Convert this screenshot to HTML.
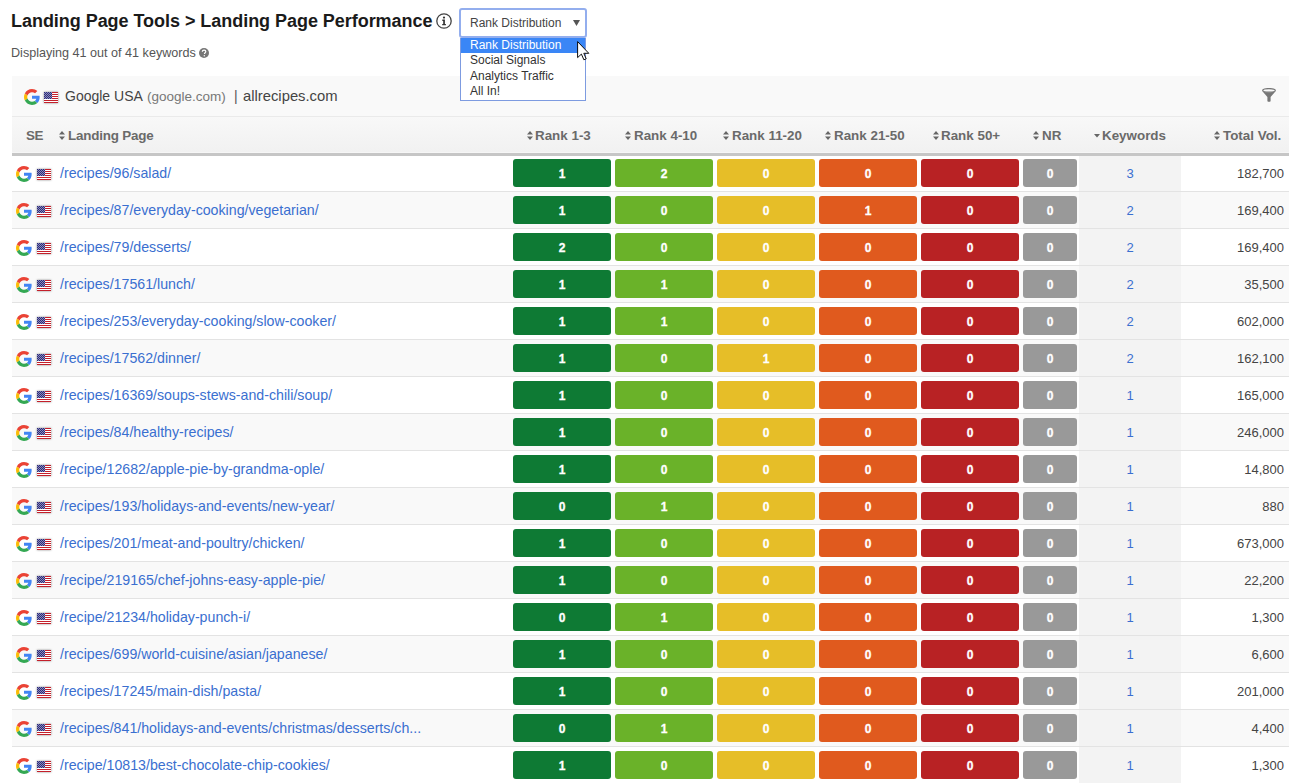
<!DOCTYPE html>
<html><head><meta charset="utf-8">
<style>
*{box-sizing:border-box;margin:0;padding:0}
html,body{width:1303px;height:783px;overflow:hidden;background:#fff;font-family:"Liberation Sans",sans-serif;color:#333}
.abs{position:absolute}
.title{position:absolute;left:11px;top:9px;font-size:18px;letter-spacing:-0.04px;line-height:24px;font-weight:bold;color:#1a1a1a;white-space:nowrap}
.info{position:absolute;left:436px;top:13px}
.sel{position:absolute;left:459px;top:8px;width:128px;height:30px;border:2px solid #93aeee;border-radius:3px;background:#fff;font-size:12px;line-height:14px;color:#444;z-index:5}
.sel .t{position:absolute;left:9px;top:6px}
.sel svg{position:absolute;left:112px;top:10px}
.dd{position:absolute;left:460px;top:38px;width:126px;height:63px;border:1px solid #7d9be0;border-top:0;background:#fff;font-size:12px;color:#333;z-index:5}
.dd .it{position:absolute;left:0;width:124px;height:15px;padding-left:9px;line-height:15px}
.dd .hl{background:#3a86f6;color:#fff}
.cursor{position:absolute;left:577px;top:41px;z-index:6}
.disp{position:absolute;left:11px;top:46px;font-size:12.6px;line-height:15px;color:#555;white-space:nowrap}
.qm{position:absolute;left:199px;top:48px}
.panel{position:absolute;left:12px;top:76px;width:1277px}
.bar{height:41px;background:#f9f9f9;border-bottom:1px solid #eaeaea;position:relative}
.bar svg{position:absolute}
.bar span{position:absolute;white-space:nowrap;line-height:20px;color:#444}
.hdr{height:39px;background:linear-gradient(#f8f8f8,#f1f1f1);border-bottom:3px solid #c6c6c6;position:relative;z-index:2;font-size:13.4px;font-weight:bold;color:#6a6a6a;box-shadow:inset 0 -1px 0 #f6f6f6}
.hdr div{position:absolute;top:10.5px;white-space:nowrap;line-height:16px}
.hdr svg{position:absolute;top:14px}
.rows{margin-top:-1px}
.row{height:37px;border-bottom:1px solid #e3e3e3;position:relative;background:#fff}
.row.odd{background:#f9f9f9}
.row>*{position:absolute}
.lp{left:48px;top:0;font-size:14.2px;color:#3a6fd0;line-height:36px;white-space:nowrap}
.c{top:4px;width:98px;height:28px;border-radius:3px;color:#fff;font-weight:bold;font-size:12px;-webkit-text-stroke:0.3px #fff;text-align:center;line-height:30px}
.r1{left:501px;background:#0e7a34}
.r2{left:603px;background:#6ab229}
.r3{left:705px;background:#e6be28}
.r4{left:807px;background:#e05a1e}
.r5{left:909px;background:#b82224}
.nr{left:1011px;width:54px;background:#999}
.kw{left:1067px;top:0;padding-top:1px;width:102px;height:36px;background:#f3f3f3;text-align:center;line-height:36px;font-size:13px;color:#3a6fd0}

.tv{left:1169px;top:1px;width:108px;text-align:right;padding-right:5px;line-height:36px;font-size:13px;color:#444}
.fl,.bfl{filter:drop-shadow(0 0.5px 1px rgba(0,0,0,.45))}
</style></head><body>
<div class="title">Landing Page Tools &gt; Landing Page Performance</div>
<svg class="info" width="16" height="16" viewBox="0 0 16 16"><circle cx="8" cy="8" r="7.2" fill="none" stroke="#444" stroke-width="1.3"/><circle cx="8" cy="4.6" r="1.1" fill="#333"/><path d="M6.3 6.6h2.6v4.4h1v1.3H6.2v-1.3h1v-3.1h-.9z" fill="#333"/></svg>
<div class="sel"><span class="t">Rank Distribution</span><svg width="7" height="6" viewBox="0 0 7 6"><path d="M0 0h7L3.5 6z" fill="#555"/></svg></div>
<div class="dd">
<div class="it hl" style="top:0">Rank Distribution</div>
<div class="it" style="top:15px">Social Signals</div>
<div class="it" style="top:30.5px">Analytics Traffic</div>
<div class="it" style="top:46px">All In!</div>
</div>
<svg class="cursor" width="13" height="20" viewBox="0 0 13 20"><path d="M0.6 0.6V16.6L4.4 13.1L6.9 18.8L9.2 17.8L6.8 12.3H11.8Z" fill="#fff" stroke="#000" stroke-width="0.95" stroke-linejoin="round"/></svg>
<div class="disp">Displaying 41 out of 41 keywords</div>
<svg class="qm" width="10" height="10" viewBox="0 0 10 10"><circle cx="5" cy="5" r="5" fill="#777"/><path d="M3.3 3.8c0-1 .8-1.7 1.8-1.7s1.7.7 1.7 1.5c0 1.2-1.3 1.2-1.3 2.3" fill="none" stroke="#fff" stroke-width="1.2"/><circle cx="5.3" cy="7.7" r=".7" fill="#fff"/></svg>
<div class="panel">
<div class="bar"><svg class="bg" style="left:12px;top:13px" width="16" height="16" viewBox="0 0 48 48"><path fill="#EA4335" d="M24 9.5c3.54 0 6.71 1.22 9.21 3.6l6.85-6.85C35.9 2.38 30.47 0 24 0 14.62 0 6.51 5.38 2.56 13.22l7.98 6.19C12.43 13.72 17.74 9.5 24 9.5z"/><path fill="#4285F4" d="M46.98 24.55c0-1.57-.15-3.09-.38-4.55H24v9.02h12.94c-.58 2.96-2.26 5.480-4.780 7.180l7.730 6c4.510-4.180 7.090-10.360 7.090-17.650z"/><path fill="#FBBC05" d="M10.53 28.59c-.48-1.45-.76-2.99-.76-4.59s.27-3.14.76-4.59l-7.98-6.19C.92 16.46 0 20.12 0 24c0 3.88.92 7.54 2.56 10.78l7.97-6.19z"/><path fill="#34A853" d="M24 48c6.48 0 11.93-2.13 15.89-5.81l-7.73-6c-2.15 1.45-4.92 2.3-8.16 2.3-6.26 0-11.57-4.22-13.47-9.91l-7.98 6.19C6.51 42.62 14.62 48 24 48z"/></svg><svg class="bfl" style="left:32px;top:16px" width="14" height="11" viewBox="0 0 14 11"><rect x="0" y="0" width="14" height="1" fill="#c4202b"/><rect x="0" y="1" width="14" height="1" fill="#fff"/><rect x="0" y="2" width="14" height="1" fill="#c4202b"/><rect x="0" y="3" width="14" height="1" fill="#fff"/><rect x="0" y="4" width="14" height="1" fill="#c4202b"/><rect x="0" y="5" width="14" height="1" fill="#fff"/><rect x="0" y="6" width="14" height="1" fill="#c4202b"/><rect x="0" y="7" width="14" height="1" fill="#fff"/><rect x="0" y="8" width="14" height="1" fill="#c4202b"/><rect x="0" y="9" width="14" height="1" fill="#fff"/><rect x="0" y="10" width="14" height="1" fill="#c4202b"/><rect x="0" y="0" width="8" height="7" fill="#2b2b7a"/><rect x="1" y="0" width="1" height="1" fill="#8a8ab8"/><rect x="3" y="0" width="1" height="1" fill="#8a8ab8"/><rect x="5" y="0" width="1" height="1" fill="#8a8ab8"/><rect x="7" y="0" width="1" height="1" fill="#8a8ab8"/><rect x="0" y="1" width="1" height="1" fill="#8a8ab8"/><rect x="2" y="1" width="1" height="1" fill="#8a8ab8"/><rect x="4" y="1" width="1" height="1" fill="#8a8ab8"/><rect x="6" y="1" width="1" height="1" fill="#8a8ab8"/><rect x="1" y="2" width="1" height="1" fill="#8a8ab8"/><rect x="3" y="2" width="1" height="1" fill="#8a8ab8"/><rect x="5" y="2" width="1" height="1" fill="#8a8ab8"/><rect x="7" y="2" width="1" height="1" fill="#8a8ab8"/><rect x="0" y="3" width="1" height="1" fill="#8a8ab8"/><rect x="2" y="3" width="1" height="1" fill="#8a8ab8"/><rect x="4" y="3" width="1" height="1" fill="#8a8ab8"/><rect x="6" y="3" width="1" height="1" fill="#8a8ab8"/><rect x="1" y="4" width="1" height="1" fill="#8a8ab8"/><rect x="3" y="4" width="1" height="1" fill="#8a8ab8"/><rect x="5" y="4" width="1" height="1" fill="#8a8ab8"/><rect x="7" y="4" width="1" height="1" fill="#8a8ab8"/><rect x="0" y="5" width="1" height="1" fill="#8a8ab8"/><rect x="2" y="5" width="1" height="1" fill="#8a8ab8"/><rect x="4" y="5" width="1" height="1" fill="#8a8ab8"/><rect x="6" y="5" width="1" height="1" fill="#8a8ab8"/><rect x="1" y="6" width="1" height="1" fill="#8a8ab8"/><rect x="3" y="6" width="1" height="1" fill="#8a8ab8"/><rect x="5" y="6" width="1" height="1" fill="#8a8ab8"/><rect x="7" y="6" width="1" height="1" fill="#8a8ab8"/></svg>
<span style="left:53px;top:10px;font-size:14px">Google USA</span>
<span style="left:135px;top:11px;font-size:13.5px;color:#777">(google.com)</span>
<span style="left:222px;top:10px;font-size:14px;color:#555">|</span>
<span style="left:231px;top:10px;font-size:14.8px">allrecipes.com</span>
<svg style="left:1250px;top:12px" width="14" height="14" viewBox="0 0 14 14"><ellipse cx="7" cy="2.4" rx="6.3" ry="1.8" fill="none" stroke="#777" stroke-width="1.3"/><path d="M0.4 3.2Q7 5.6 13.6 3.2L8.6 9V13.2Q7 14.2 5.4 13.2V9Z" fill="#777"/></svg>
</div>
<div class="hdr">
<div style="left:14px;letter-spacing:-0.5px">SE</div>
<svg style="left:47px" width="6" height="9" viewBox="0 0 6 9"><path d="M0 3.6L3 0L6 3.6ZM0 5.4L3 9L6 5.4Z" fill="#666"/></svg><svg style="left:515px" width="6" height="9" viewBox="0 0 6 9"><path d="M0 3.6L3 0L6 3.6ZM0 5.4L3 9L6 5.4Z" fill="#666"/></svg><svg style="left:613px" width="6" height="9" viewBox="0 0 6 9"><path d="M0 3.6L3 0L6 3.6ZM0 5.4L3 9L6 5.4Z" fill="#666"/></svg><svg style="left:711px" width="6" height="9" viewBox="0 0 6 9"><path d="M0 3.6L3 0L6 3.6ZM0 5.4L3 9L6 5.4Z" fill="#666"/></svg><svg style="left:813px" width="6" height="9" viewBox="0 0 6 9"><path d="M0 3.6L3 0L6 3.6ZM0 5.4L3 9L6 5.4Z" fill="#666"/></svg><svg style="left:921px" width="6" height="9" viewBox="0 0 6 9"><path d="M0 3.6L3 0L6 3.6ZM0 5.4L3 9L6 5.4Z" fill="#666"/></svg><svg style="left:1021px" width="6" height="9" viewBox="0 0 6 9"><path d="M0 3.6L3 0L6 3.6ZM0 5.4L3 9L6 5.4Z" fill="#666"/></svg><svg style="left:1202px" width="6" height="9" viewBox="0 0 6 9"><path d="M0 3.6L3 0L6 3.6ZM0 5.4L3 9L6 5.4Z" fill="#666"/></svg><svg style="left:1082px;top:17px" width="6" height="4" viewBox="0 0 6 4"><path d="M0 0L3 3.6L6 0Z" fill="#666"/></svg>
<div style="left:56px;letter-spacing:-0.2px">Landing Page</div>
<div style="left:523px">Rank 1-3</div>
<div style="left:622px">Rank 4-10</div>
<div style="left:720px">Rank 11-20</div>
<div style="left:822px">Rank 21-50</div>
<div style="left:929px">Rank 50+</div>
<div style="left:1030px">NR</div>
<div style="left:1090px">Keywords</div>
<div style="left:1211px">Total Vol.</div>
</div>
<div class="rows">
<div class="row"><svg class="g" style="left:4px;top:11px" width="16" height="16" viewBox="0 0 48 48"><path fill="#EA4335" d="M24 9.5c3.54 0 6.71 1.22 9.21 3.6l6.85-6.85C35.9 2.38 30.47 0 24 0 14.62 0 6.51 5.38 2.56 13.22l7.98 6.19C12.43 13.72 17.74 9.5 24 9.5z"/><path fill="#4285F4" d="M46.98 24.55c0-1.57-.15-3.09-.38-4.55H24v9.02h12.94c-.58 2.96-2.26 5.480-4.780 7.180l7.730 6c4.510-4.180 7.090-10.360 7.090-17.650z"/><path fill="#FBBC05" d="M10.53 28.59c-.48-1.45-.76-2.99-.76-4.59s.27-3.14.76-4.59l-7.98-6.19C.92 16.46 0 20.12 0 24c0 3.88.92 7.54 2.56 10.78l7.97-6.19z"/><path fill="#34A853" d="M24 48c6.48 0 11.93-2.13 15.89-5.81l-7.73-6c-2.15 1.45-4.92 2.3-8.16 2.3-6.26 0-11.57-4.22-13.47-9.91l-7.98 6.19C6.51 42.62 14.62 48 24 48z"/></svg><svg class="fl" style="left:25px;top:14px" width="14" height="11" viewBox="0 0 14 11"><rect x="0" y="0" width="14" height="1" fill="#c4202b"/><rect x="0" y="1" width="14" height="1" fill="#fff"/><rect x="0" y="2" width="14" height="1" fill="#c4202b"/><rect x="0" y="3" width="14" height="1" fill="#fff"/><rect x="0" y="4" width="14" height="1" fill="#c4202b"/><rect x="0" y="5" width="14" height="1" fill="#fff"/><rect x="0" y="6" width="14" height="1" fill="#c4202b"/><rect x="0" y="7" width="14" height="1" fill="#fff"/><rect x="0" y="8" width="14" height="1" fill="#c4202b"/><rect x="0" y="9" width="14" height="1" fill="#fff"/><rect x="0" y="10" width="14" height="1" fill="#c4202b"/><rect x="0" y="0" width="8" height="7" fill="#2b2b7a"/><rect x="1" y="0" width="1" height="1" fill="#8a8ab8"/><rect x="3" y="0" width="1" height="1" fill="#8a8ab8"/><rect x="5" y="0" width="1" height="1" fill="#8a8ab8"/><rect x="7" y="0" width="1" height="1" fill="#8a8ab8"/><rect x="0" y="1" width="1" height="1" fill="#8a8ab8"/><rect x="2" y="1" width="1" height="1" fill="#8a8ab8"/><rect x="4" y="1" width="1" height="1" fill="#8a8ab8"/><rect x="6" y="1" width="1" height="1" fill="#8a8ab8"/><rect x="1" y="2" width="1" height="1" fill="#8a8ab8"/><rect x="3" y="2" width="1" height="1" fill="#8a8ab8"/><rect x="5" y="2" width="1" height="1" fill="#8a8ab8"/><rect x="7" y="2" width="1" height="1" fill="#8a8ab8"/><rect x="0" y="3" width="1" height="1" fill="#8a8ab8"/><rect x="2" y="3" width="1" height="1" fill="#8a8ab8"/><rect x="4" y="3" width="1" height="1" fill="#8a8ab8"/><rect x="6" y="3" width="1" height="1" fill="#8a8ab8"/><rect x="1" y="4" width="1" height="1" fill="#8a8ab8"/><rect x="3" y="4" width="1" height="1" fill="#8a8ab8"/><rect x="5" y="4" width="1" height="1" fill="#8a8ab8"/><rect x="7" y="4" width="1" height="1" fill="#8a8ab8"/><rect x="0" y="5" width="1" height="1" fill="#8a8ab8"/><rect x="2" y="5" width="1" height="1" fill="#8a8ab8"/><rect x="4" y="5" width="1" height="1" fill="#8a8ab8"/><rect x="6" y="5" width="1" height="1" fill="#8a8ab8"/><rect x="1" y="6" width="1" height="1" fill="#8a8ab8"/><rect x="3" y="6" width="1" height="1" fill="#8a8ab8"/><rect x="5" y="6" width="1" height="1" fill="#8a8ab8"/><rect x="7" y="6" width="1" height="1" fill="#8a8ab8"/></svg><div class="lp">/recipes/96/salad/</div><div class="c r1">1</div><div class="c r2">2</div><div class="c r3">0</div><div class="c r4">0</div><div class="c r5">0</div><div class="c nr">0</div><div class="kw">3</div><div class="tv">182,700</div></div>
<div class="row odd"><svg class="g" style="left:4px;top:11px" width="16" height="16" viewBox="0 0 48 48"><path fill="#EA4335" d="M24 9.5c3.54 0 6.71 1.22 9.21 3.6l6.85-6.85C35.9 2.38 30.47 0 24 0 14.62 0 6.51 5.38 2.56 13.22l7.98 6.19C12.43 13.72 17.74 9.5 24 9.5z"/><path fill="#4285F4" d="M46.98 24.55c0-1.57-.15-3.09-.38-4.55H24v9.02h12.94c-.58 2.96-2.26 5.480-4.780 7.180l7.730 6c4.510-4.180 7.090-10.360 7.090-17.650z"/><path fill="#FBBC05" d="M10.53 28.59c-.48-1.45-.76-2.99-.76-4.59s.27-3.14.76-4.59l-7.98-6.19C.92 16.46 0 20.12 0 24c0 3.88.92 7.54 2.56 10.78l7.97-6.19z"/><path fill="#34A853" d="M24 48c6.48 0 11.93-2.13 15.89-5.81l-7.73-6c-2.15 1.45-4.92 2.3-8.16 2.3-6.26 0-11.57-4.22-13.47-9.91l-7.98 6.19C6.51 42.62 14.62 48 24 48z"/></svg><svg class="fl" style="left:25px;top:14px" width="14" height="11" viewBox="0 0 14 11"><rect x="0" y="0" width="14" height="1" fill="#c4202b"/><rect x="0" y="1" width="14" height="1" fill="#fff"/><rect x="0" y="2" width="14" height="1" fill="#c4202b"/><rect x="0" y="3" width="14" height="1" fill="#fff"/><rect x="0" y="4" width="14" height="1" fill="#c4202b"/><rect x="0" y="5" width="14" height="1" fill="#fff"/><rect x="0" y="6" width="14" height="1" fill="#c4202b"/><rect x="0" y="7" width="14" height="1" fill="#fff"/><rect x="0" y="8" width="14" height="1" fill="#c4202b"/><rect x="0" y="9" width="14" height="1" fill="#fff"/><rect x="0" y="10" width="14" height="1" fill="#c4202b"/><rect x="0" y="0" width="8" height="7" fill="#2b2b7a"/><rect x="1" y="0" width="1" height="1" fill="#8a8ab8"/><rect x="3" y="0" width="1" height="1" fill="#8a8ab8"/><rect x="5" y="0" width="1" height="1" fill="#8a8ab8"/><rect x="7" y="0" width="1" height="1" fill="#8a8ab8"/><rect x="0" y="1" width="1" height="1" fill="#8a8ab8"/><rect x="2" y="1" width="1" height="1" fill="#8a8ab8"/><rect x="4" y="1" width="1" height="1" fill="#8a8ab8"/><rect x="6" y="1" width="1" height="1" fill="#8a8ab8"/><rect x="1" y="2" width="1" height="1" fill="#8a8ab8"/><rect x="3" y="2" width="1" height="1" fill="#8a8ab8"/><rect x="5" y="2" width="1" height="1" fill="#8a8ab8"/><rect x="7" y="2" width="1" height="1" fill="#8a8ab8"/><rect x="0" y="3" width="1" height="1" fill="#8a8ab8"/><rect x="2" y="3" width="1" height="1" fill="#8a8ab8"/><rect x="4" y="3" width="1" height="1" fill="#8a8ab8"/><rect x="6" y="3" width="1" height="1" fill="#8a8ab8"/><rect x="1" y="4" width="1" height="1" fill="#8a8ab8"/><rect x="3" y="4" width="1" height="1" fill="#8a8ab8"/><rect x="5" y="4" width="1" height="1" fill="#8a8ab8"/><rect x="7" y="4" width="1" height="1" fill="#8a8ab8"/><rect x="0" y="5" width="1" height="1" fill="#8a8ab8"/><rect x="2" y="5" width="1" height="1" fill="#8a8ab8"/><rect x="4" y="5" width="1" height="1" fill="#8a8ab8"/><rect x="6" y="5" width="1" height="1" fill="#8a8ab8"/><rect x="1" y="6" width="1" height="1" fill="#8a8ab8"/><rect x="3" y="6" width="1" height="1" fill="#8a8ab8"/><rect x="5" y="6" width="1" height="1" fill="#8a8ab8"/><rect x="7" y="6" width="1" height="1" fill="#8a8ab8"/></svg><div class="lp">/recipes/87/everyday-cooking/vegetarian/</div><div class="c r1">1</div><div class="c r2">0</div><div class="c r3">0</div><div class="c r4">1</div><div class="c r5">0</div><div class="c nr">0</div><div class="kw">2</div><div class="tv">169,400</div></div>
<div class="row"><svg class="g" style="left:4px;top:11px" width="16" height="16" viewBox="0 0 48 48"><path fill="#EA4335" d="M24 9.5c3.54 0 6.71 1.22 9.21 3.6l6.85-6.85C35.9 2.38 30.47 0 24 0 14.62 0 6.51 5.38 2.56 13.22l7.98 6.19C12.43 13.72 17.74 9.5 24 9.5z"/><path fill="#4285F4" d="M46.98 24.55c0-1.57-.15-3.09-.38-4.55H24v9.02h12.94c-.58 2.96-2.26 5.480-4.780 7.180l7.730 6c4.510-4.180 7.090-10.360 7.090-17.650z"/><path fill="#FBBC05" d="M10.53 28.59c-.48-1.45-.76-2.99-.76-4.59s.27-3.14.76-4.59l-7.98-6.19C.92 16.46 0 20.12 0 24c0 3.88.92 7.54 2.56 10.78l7.97-6.19z"/><path fill="#34A853" d="M24 48c6.48 0 11.93-2.13 15.89-5.81l-7.73-6c-2.15 1.45-4.92 2.3-8.16 2.3-6.26 0-11.57-4.22-13.47-9.91l-7.98 6.19C6.51 42.62 14.62 48 24 48z"/></svg><svg class="fl" style="left:25px;top:14px" width="14" height="11" viewBox="0 0 14 11"><rect x="0" y="0" width="14" height="1" fill="#c4202b"/><rect x="0" y="1" width="14" height="1" fill="#fff"/><rect x="0" y="2" width="14" height="1" fill="#c4202b"/><rect x="0" y="3" width="14" height="1" fill="#fff"/><rect x="0" y="4" width="14" height="1" fill="#c4202b"/><rect x="0" y="5" width="14" height="1" fill="#fff"/><rect x="0" y="6" width="14" height="1" fill="#c4202b"/><rect x="0" y="7" width="14" height="1" fill="#fff"/><rect x="0" y="8" width="14" height="1" fill="#c4202b"/><rect x="0" y="9" width="14" height="1" fill="#fff"/><rect x="0" y="10" width="14" height="1" fill="#c4202b"/><rect x="0" y="0" width="8" height="7" fill="#2b2b7a"/><rect x="1" y="0" width="1" height="1" fill="#8a8ab8"/><rect x="3" y="0" width="1" height="1" fill="#8a8ab8"/><rect x="5" y="0" width="1" height="1" fill="#8a8ab8"/><rect x="7" y="0" width="1" height="1" fill="#8a8ab8"/><rect x="0" y="1" width="1" height="1" fill="#8a8ab8"/><rect x="2" y="1" width="1" height="1" fill="#8a8ab8"/><rect x="4" y="1" width="1" height="1" fill="#8a8ab8"/><rect x="6" y="1" width="1" height="1" fill="#8a8ab8"/><rect x="1" y="2" width="1" height="1" fill="#8a8ab8"/><rect x="3" y="2" width="1" height="1" fill="#8a8ab8"/><rect x="5" y="2" width="1" height="1" fill="#8a8ab8"/><rect x="7" y="2" width="1" height="1" fill="#8a8ab8"/><rect x="0" y="3" width="1" height="1" fill="#8a8ab8"/><rect x="2" y="3" width="1" height="1" fill="#8a8ab8"/><rect x="4" y="3" width="1" height="1" fill="#8a8ab8"/><rect x="6" y="3" width="1" height="1" fill="#8a8ab8"/><rect x="1" y="4" width="1" height="1" fill="#8a8ab8"/><rect x="3" y="4" width="1" height="1" fill="#8a8ab8"/><rect x="5" y="4" width="1" height="1" fill="#8a8ab8"/><rect x="7" y="4" width="1" height="1" fill="#8a8ab8"/><rect x="0" y="5" width="1" height="1" fill="#8a8ab8"/><rect x="2" y="5" width="1" height="1" fill="#8a8ab8"/><rect x="4" y="5" width="1" height="1" fill="#8a8ab8"/><rect x="6" y="5" width="1" height="1" fill="#8a8ab8"/><rect x="1" y="6" width="1" height="1" fill="#8a8ab8"/><rect x="3" y="6" width="1" height="1" fill="#8a8ab8"/><rect x="5" y="6" width="1" height="1" fill="#8a8ab8"/><rect x="7" y="6" width="1" height="1" fill="#8a8ab8"/></svg><div class="lp">/recipes/79/desserts/</div><div class="c r1">2</div><div class="c r2">0</div><div class="c r3">0</div><div class="c r4">0</div><div class="c r5">0</div><div class="c nr">0</div><div class="kw">2</div><div class="tv">169,400</div></div>
<div class="row odd"><svg class="g" style="left:4px;top:11px" width="16" height="16" viewBox="0 0 48 48"><path fill="#EA4335" d="M24 9.5c3.54 0 6.71 1.22 9.21 3.6l6.85-6.85C35.9 2.38 30.47 0 24 0 14.62 0 6.51 5.38 2.56 13.22l7.98 6.19C12.43 13.72 17.74 9.5 24 9.5z"/><path fill="#4285F4" d="M46.98 24.55c0-1.57-.15-3.09-.38-4.55H24v9.02h12.94c-.58 2.96-2.26 5.480-4.780 7.180l7.730 6c4.510-4.180 7.090-10.360 7.090-17.650z"/><path fill="#FBBC05" d="M10.53 28.59c-.48-1.45-.76-2.99-.76-4.59s.27-3.14.76-4.59l-7.98-6.19C.92 16.46 0 20.12 0 24c0 3.88.92 7.54 2.56 10.78l7.97-6.19z"/><path fill="#34A853" d="M24 48c6.48 0 11.93-2.13 15.89-5.81l-7.73-6c-2.15 1.45-4.92 2.3-8.16 2.3-6.26 0-11.57-4.22-13.47-9.91l-7.98 6.19C6.51 42.62 14.62 48 24 48z"/></svg><svg class="fl" style="left:25px;top:14px" width="14" height="11" viewBox="0 0 14 11"><rect x="0" y="0" width="14" height="1" fill="#c4202b"/><rect x="0" y="1" width="14" height="1" fill="#fff"/><rect x="0" y="2" width="14" height="1" fill="#c4202b"/><rect x="0" y="3" width="14" height="1" fill="#fff"/><rect x="0" y="4" width="14" height="1" fill="#c4202b"/><rect x="0" y="5" width="14" height="1" fill="#fff"/><rect x="0" y="6" width="14" height="1" fill="#c4202b"/><rect x="0" y="7" width="14" height="1" fill="#fff"/><rect x="0" y="8" width="14" height="1" fill="#c4202b"/><rect x="0" y="9" width="14" height="1" fill="#fff"/><rect x="0" y="10" width="14" height="1" fill="#c4202b"/><rect x="0" y="0" width="8" height="7" fill="#2b2b7a"/><rect x="1" y="0" width="1" height="1" fill="#8a8ab8"/><rect x="3" y="0" width="1" height="1" fill="#8a8ab8"/><rect x="5" y="0" width="1" height="1" fill="#8a8ab8"/><rect x="7" y="0" width="1" height="1" fill="#8a8ab8"/><rect x="0" y="1" width="1" height="1" fill="#8a8ab8"/><rect x="2" y="1" width="1" height="1" fill="#8a8ab8"/><rect x="4" y="1" width="1" height="1" fill="#8a8ab8"/><rect x="6" y="1" width="1" height="1" fill="#8a8ab8"/><rect x="1" y="2" width="1" height="1" fill="#8a8ab8"/><rect x="3" y="2" width="1" height="1" fill="#8a8ab8"/><rect x="5" y="2" width="1" height="1" fill="#8a8ab8"/><rect x="7" y="2" width="1" height="1" fill="#8a8ab8"/><rect x="0" y="3" width="1" height="1" fill="#8a8ab8"/><rect x="2" y="3" width="1" height="1" fill="#8a8ab8"/><rect x="4" y="3" width="1" height="1" fill="#8a8ab8"/><rect x="6" y="3" width="1" height="1" fill="#8a8ab8"/><rect x="1" y="4" width="1" height="1" fill="#8a8ab8"/><rect x="3" y="4" width="1" height="1" fill="#8a8ab8"/><rect x="5" y="4" width="1" height="1" fill="#8a8ab8"/><rect x="7" y="4" width="1" height="1" fill="#8a8ab8"/><rect x="0" y="5" width="1" height="1" fill="#8a8ab8"/><rect x="2" y="5" width="1" height="1" fill="#8a8ab8"/><rect x="4" y="5" width="1" height="1" fill="#8a8ab8"/><rect x="6" y="5" width="1" height="1" fill="#8a8ab8"/><rect x="1" y="6" width="1" height="1" fill="#8a8ab8"/><rect x="3" y="6" width="1" height="1" fill="#8a8ab8"/><rect x="5" y="6" width="1" height="1" fill="#8a8ab8"/><rect x="7" y="6" width="1" height="1" fill="#8a8ab8"/></svg><div class="lp">/recipes/17561/lunch/</div><div class="c r1">1</div><div class="c r2">1</div><div class="c r3">0</div><div class="c r4">0</div><div class="c r5">0</div><div class="c nr">0</div><div class="kw">2</div><div class="tv">35,500</div></div>
<div class="row"><svg class="g" style="left:4px;top:11px" width="16" height="16" viewBox="0 0 48 48"><path fill="#EA4335" d="M24 9.5c3.54 0 6.71 1.22 9.21 3.6l6.85-6.85C35.9 2.38 30.47 0 24 0 14.62 0 6.51 5.38 2.56 13.22l7.98 6.19C12.43 13.72 17.74 9.5 24 9.5z"/><path fill="#4285F4" d="M46.98 24.55c0-1.57-.15-3.09-.38-4.55H24v9.02h12.94c-.58 2.96-2.26 5.480-4.780 7.180l7.730 6c4.510-4.180 7.090-10.360 7.090-17.650z"/><path fill="#FBBC05" d="M10.53 28.59c-.48-1.45-.76-2.99-.76-4.59s.27-3.14.76-4.59l-7.98-6.19C.92 16.46 0 20.12 0 24c0 3.88.92 7.54 2.56 10.78l7.97-6.19z"/><path fill="#34A853" d="M24 48c6.48 0 11.93-2.13 15.89-5.81l-7.73-6c-2.15 1.45-4.92 2.3-8.16 2.3-6.26 0-11.57-4.22-13.47-9.91l-7.98 6.19C6.51 42.62 14.62 48 24 48z"/></svg><svg class="fl" style="left:25px;top:14px" width="14" height="11" viewBox="0 0 14 11"><rect x="0" y="0" width="14" height="1" fill="#c4202b"/><rect x="0" y="1" width="14" height="1" fill="#fff"/><rect x="0" y="2" width="14" height="1" fill="#c4202b"/><rect x="0" y="3" width="14" height="1" fill="#fff"/><rect x="0" y="4" width="14" height="1" fill="#c4202b"/><rect x="0" y="5" width="14" height="1" fill="#fff"/><rect x="0" y="6" width="14" height="1" fill="#c4202b"/><rect x="0" y="7" width="14" height="1" fill="#fff"/><rect x="0" y="8" width="14" height="1" fill="#c4202b"/><rect x="0" y="9" width="14" height="1" fill="#fff"/><rect x="0" y="10" width="14" height="1" fill="#c4202b"/><rect x="0" y="0" width="8" height="7" fill="#2b2b7a"/><rect x="1" y="0" width="1" height="1" fill="#8a8ab8"/><rect x="3" y="0" width="1" height="1" fill="#8a8ab8"/><rect x="5" y="0" width="1" height="1" fill="#8a8ab8"/><rect x="7" y="0" width="1" height="1" fill="#8a8ab8"/><rect x="0" y="1" width="1" height="1" fill="#8a8ab8"/><rect x="2" y="1" width="1" height="1" fill="#8a8ab8"/><rect x="4" y="1" width="1" height="1" fill="#8a8ab8"/><rect x="6" y="1" width="1" height="1" fill="#8a8ab8"/><rect x="1" y="2" width="1" height="1" fill="#8a8ab8"/><rect x="3" y="2" width="1" height="1" fill="#8a8ab8"/><rect x="5" y="2" width="1" height="1" fill="#8a8ab8"/><rect x="7" y="2" width="1" height="1" fill="#8a8ab8"/><rect x="0" y="3" width="1" height="1" fill="#8a8ab8"/><rect x="2" y="3" width="1" height="1" fill="#8a8ab8"/><rect x="4" y="3" width="1" height="1" fill="#8a8ab8"/><rect x="6" y="3" width="1" height="1" fill="#8a8ab8"/><rect x="1" y="4" width="1" height="1" fill="#8a8ab8"/><rect x="3" y="4" width="1" height="1" fill="#8a8ab8"/><rect x="5" y="4" width="1" height="1" fill="#8a8ab8"/><rect x="7" y="4" width="1" height="1" fill="#8a8ab8"/><rect x="0" y="5" width="1" height="1" fill="#8a8ab8"/><rect x="2" y="5" width="1" height="1" fill="#8a8ab8"/><rect x="4" y="5" width="1" height="1" fill="#8a8ab8"/><rect x="6" y="5" width="1" height="1" fill="#8a8ab8"/><rect x="1" y="6" width="1" height="1" fill="#8a8ab8"/><rect x="3" y="6" width="1" height="1" fill="#8a8ab8"/><rect x="5" y="6" width="1" height="1" fill="#8a8ab8"/><rect x="7" y="6" width="1" height="1" fill="#8a8ab8"/></svg><div class="lp">/recipes/253/everyday-cooking/slow-cooker/</div><div class="c r1">1</div><div class="c r2">1</div><div class="c r3">0</div><div class="c r4">0</div><div class="c r5">0</div><div class="c nr">0</div><div class="kw">2</div><div class="tv">602,000</div></div>
<div class="row odd"><svg class="g" style="left:4px;top:11px" width="16" height="16" viewBox="0 0 48 48"><path fill="#EA4335" d="M24 9.5c3.54 0 6.71 1.22 9.21 3.6l6.85-6.85C35.9 2.38 30.47 0 24 0 14.62 0 6.51 5.38 2.56 13.22l7.98 6.19C12.43 13.72 17.74 9.5 24 9.5z"/><path fill="#4285F4" d="M46.98 24.55c0-1.57-.15-3.09-.38-4.55H24v9.02h12.94c-.58 2.96-2.26 5.480-4.780 7.180l7.730 6c4.510-4.180 7.090-10.360 7.090-17.650z"/><path fill="#FBBC05" d="M10.53 28.59c-.48-1.45-.76-2.99-.76-4.59s.27-3.14.76-4.59l-7.98-6.19C.92 16.46 0 20.12 0 24c0 3.88.92 7.54 2.56 10.78l7.97-6.19z"/><path fill="#34A853" d="M24 48c6.48 0 11.93-2.13 15.89-5.81l-7.73-6c-2.15 1.45-4.92 2.3-8.16 2.3-6.26 0-11.57-4.22-13.47-9.91l-7.98 6.19C6.51 42.62 14.62 48 24 48z"/></svg><svg class="fl" style="left:25px;top:14px" width="14" height="11" viewBox="0 0 14 11"><rect x="0" y="0" width="14" height="1" fill="#c4202b"/><rect x="0" y="1" width="14" height="1" fill="#fff"/><rect x="0" y="2" width="14" height="1" fill="#c4202b"/><rect x="0" y="3" width="14" height="1" fill="#fff"/><rect x="0" y="4" width="14" height="1" fill="#c4202b"/><rect x="0" y="5" width="14" height="1" fill="#fff"/><rect x="0" y="6" width="14" height="1" fill="#c4202b"/><rect x="0" y="7" width="14" height="1" fill="#fff"/><rect x="0" y="8" width="14" height="1" fill="#c4202b"/><rect x="0" y="9" width="14" height="1" fill="#fff"/><rect x="0" y="10" width="14" height="1" fill="#c4202b"/><rect x="0" y="0" width="8" height="7" fill="#2b2b7a"/><rect x="1" y="0" width="1" height="1" fill="#8a8ab8"/><rect x="3" y="0" width="1" height="1" fill="#8a8ab8"/><rect x="5" y="0" width="1" height="1" fill="#8a8ab8"/><rect x="7" y="0" width="1" height="1" fill="#8a8ab8"/><rect x="0" y="1" width="1" height="1" fill="#8a8ab8"/><rect x="2" y="1" width="1" height="1" fill="#8a8ab8"/><rect x="4" y="1" width="1" height="1" fill="#8a8ab8"/><rect x="6" y="1" width="1" height="1" fill="#8a8ab8"/><rect x="1" y="2" width="1" height="1" fill="#8a8ab8"/><rect x="3" y="2" width="1" height="1" fill="#8a8ab8"/><rect x="5" y="2" width="1" height="1" fill="#8a8ab8"/><rect x="7" y="2" width="1" height="1" fill="#8a8ab8"/><rect x="0" y="3" width="1" height="1" fill="#8a8ab8"/><rect x="2" y="3" width="1" height="1" fill="#8a8ab8"/><rect x="4" y="3" width="1" height="1" fill="#8a8ab8"/><rect x="6" y="3" width="1" height="1" fill="#8a8ab8"/><rect x="1" y="4" width="1" height="1" fill="#8a8ab8"/><rect x="3" y="4" width="1" height="1" fill="#8a8ab8"/><rect x="5" y="4" width="1" height="1" fill="#8a8ab8"/><rect x="7" y="4" width="1" height="1" fill="#8a8ab8"/><rect x="0" y="5" width="1" height="1" fill="#8a8ab8"/><rect x="2" y="5" width="1" height="1" fill="#8a8ab8"/><rect x="4" y="5" width="1" height="1" fill="#8a8ab8"/><rect x="6" y="5" width="1" height="1" fill="#8a8ab8"/><rect x="1" y="6" width="1" height="1" fill="#8a8ab8"/><rect x="3" y="6" width="1" height="1" fill="#8a8ab8"/><rect x="5" y="6" width="1" height="1" fill="#8a8ab8"/><rect x="7" y="6" width="1" height="1" fill="#8a8ab8"/></svg><div class="lp">/recipes/17562/dinner/</div><div class="c r1">1</div><div class="c r2">0</div><div class="c r3">1</div><div class="c r4">0</div><div class="c r5">0</div><div class="c nr">0</div><div class="kw">2</div><div class="tv">162,100</div></div>
<div class="row"><svg class="g" style="left:4px;top:11px" width="16" height="16" viewBox="0 0 48 48"><path fill="#EA4335" d="M24 9.5c3.54 0 6.71 1.22 9.21 3.6l6.85-6.85C35.9 2.38 30.47 0 24 0 14.62 0 6.51 5.38 2.56 13.22l7.98 6.19C12.43 13.72 17.74 9.5 24 9.5z"/><path fill="#4285F4" d="M46.98 24.55c0-1.57-.15-3.09-.38-4.55H24v9.02h12.94c-.58 2.96-2.26 5.480-4.780 7.180l7.730 6c4.510-4.180 7.090-10.360 7.090-17.650z"/><path fill="#FBBC05" d="M10.53 28.59c-.48-1.45-.76-2.99-.76-4.59s.27-3.14.76-4.59l-7.98-6.19C.92 16.46 0 20.12 0 24c0 3.88.92 7.54 2.56 10.78l7.97-6.19z"/><path fill="#34A853" d="M24 48c6.48 0 11.93-2.13 15.89-5.81l-7.73-6c-2.15 1.45-4.92 2.3-8.16 2.3-6.26 0-11.57-4.22-13.47-9.91l-7.98 6.19C6.51 42.62 14.62 48 24 48z"/></svg><svg class="fl" style="left:25px;top:14px" width="14" height="11" viewBox="0 0 14 11"><rect x="0" y="0" width="14" height="1" fill="#c4202b"/><rect x="0" y="1" width="14" height="1" fill="#fff"/><rect x="0" y="2" width="14" height="1" fill="#c4202b"/><rect x="0" y="3" width="14" height="1" fill="#fff"/><rect x="0" y="4" width="14" height="1" fill="#c4202b"/><rect x="0" y="5" width="14" height="1" fill="#fff"/><rect x="0" y="6" width="14" height="1" fill="#c4202b"/><rect x="0" y="7" width="14" height="1" fill="#fff"/><rect x="0" y="8" width="14" height="1" fill="#c4202b"/><rect x="0" y="9" width="14" height="1" fill="#fff"/><rect x="0" y="10" width="14" height="1" fill="#c4202b"/><rect x="0" y="0" width="8" height="7" fill="#2b2b7a"/><rect x="1" y="0" width="1" height="1" fill="#8a8ab8"/><rect x="3" y="0" width="1" height="1" fill="#8a8ab8"/><rect x="5" y="0" width="1" height="1" fill="#8a8ab8"/><rect x="7" y="0" width="1" height="1" fill="#8a8ab8"/><rect x="0" y="1" width="1" height="1" fill="#8a8ab8"/><rect x="2" y="1" width="1" height="1" fill="#8a8ab8"/><rect x="4" y="1" width="1" height="1" fill="#8a8ab8"/><rect x="6" y="1" width="1" height="1" fill="#8a8ab8"/><rect x="1" y="2" width="1" height="1" fill="#8a8ab8"/><rect x="3" y="2" width="1" height="1" fill="#8a8ab8"/><rect x="5" y="2" width="1" height="1" fill="#8a8ab8"/><rect x="7" y="2" width="1" height="1" fill="#8a8ab8"/><rect x="0" y="3" width="1" height="1" fill="#8a8ab8"/><rect x="2" y="3" width="1" height="1" fill="#8a8ab8"/><rect x="4" y="3" width="1" height="1" fill="#8a8ab8"/><rect x="6" y="3" width="1" height="1" fill="#8a8ab8"/><rect x="1" y="4" width="1" height="1" fill="#8a8ab8"/><rect x="3" y="4" width="1" height="1" fill="#8a8ab8"/><rect x="5" y="4" width="1" height="1" fill="#8a8ab8"/><rect x="7" y="4" width="1" height="1" fill="#8a8ab8"/><rect x="0" y="5" width="1" height="1" fill="#8a8ab8"/><rect x="2" y="5" width="1" height="1" fill="#8a8ab8"/><rect x="4" y="5" width="1" height="1" fill="#8a8ab8"/><rect x="6" y="5" width="1" height="1" fill="#8a8ab8"/><rect x="1" y="6" width="1" height="1" fill="#8a8ab8"/><rect x="3" y="6" width="1" height="1" fill="#8a8ab8"/><rect x="5" y="6" width="1" height="1" fill="#8a8ab8"/><rect x="7" y="6" width="1" height="1" fill="#8a8ab8"/></svg><div class="lp">/recipes/16369/soups-stews-and-chili/soup/</div><div class="c r1">1</div><div class="c r2">0</div><div class="c r3">0</div><div class="c r4">0</div><div class="c r5">0</div><div class="c nr">0</div><div class="kw">1</div><div class="tv">165,000</div></div>
<div class="row odd"><svg class="g" style="left:4px;top:11px" width="16" height="16" viewBox="0 0 48 48"><path fill="#EA4335" d="M24 9.5c3.54 0 6.71 1.22 9.21 3.6l6.85-6.85C35.9 2.38 30.47 0 24 0 14.62 0 6.51 5.38 2.56 13.22l7.98 6.19C12.43 13.72 17.74 9.5 24 9.5z"/><path fill="#4285F4" d="M46.98 24.55c0-1.57-.15-3.09-.38-4.55H24v9.02h12.94c-.58 2.96-2.26 5.480-4.780 7.180l7.730 6c4.510-4.180 7.090-10.360 7.090-17.650z"/><path fill="#FBBC05" d="M10.53 28.59c-.48-1.45-.76-2.99-.76-4.59s.27-3.14.76-4.59l-7.98-6.19C.92 16.46 0 20.12 0 24c0 3.88.92 7.54 2.56 10.78l7.97-6.19z"/><path fill="#34A853" d="M24 48c6.48 0 11.93-2.13 15.89-5.81l-7.73-6c-2.15 1.45-4.92 2.3-8.16 2.3-6.26 0-11.57-4.22-13.47-9.91l-7.98 6.19C6.51 42.62 14.62 48 24 48z"/></svg><svg class="fl" style="left:25px;top:14px" width="14" height="11" viewBox="0 0 14 11"><rect x="0" y="0" width="14" height="1" fill="#c4202b"/><rect x="0" y="1" width="14" height="1" fill="#fff"/><rect x="0" y="2" width="14" height="1" fill="#c4202b"/><rect x="0" y="3" width="14" height="1" fill="#fff"/><rect x="0" y="4" width="14" height="1" fill="#c4202b"/><rect x="0" y="5" width="14" height="1" fill="#fff"/><rect x="0" y="6" width="14" height="1" fill="#c4202b"/><rect x="0" y="7" width="14" height="1" fill="#fff"/><rect x="0" y="8" width="14" height="1" fill="#c4202b"/><rect x="0" y="9" width="14" height="1" fill="#fff"/><rect x="0" y="10" width="14" height="1" fill="#c4202b"/><rect x="0" y="0" width="8" height="7" fill="#2b2b7a"/><rect x="1" y="0" width="1" height="1" fill="#8a8ab8"/><rect x="3" y="0" width="1" height="1" fill="#8a8ab8"/><rect x="5" y="0" width="1" height="1" fill="#8a8ab8"/><rect x="7" y="0" width="1" height="1" fill="#8a8ab8"/><rect x="0" y="1" width="1" height="1" fill="#8a8ab8"/><rect x="2" y="1" width="1" height="1" fill="#8a8ab8"/><rect x="4" y="1" width="1" height="1" fill="#8a8ab8"/><rect x="6" y="1" width="1" height="1" fill="#8a8ab8"/><rect x="1" y="2" width="1" height="1" fill="#8a8ab8"/><rect x="3" y="2" width="1" height="1" fill="#8a8ab8"/><rect x="5" y="2" width="1" height="1" fill="#8a8ab8"/><rect x="7" y="2" width="1" height="1" fill="#8a8ab8"/><rect x="0" y="3" width="1" height="1" fill="#8a8ab8"/><rect x="2" y="3" width="1" height="1" fill="#8a8ab8"/><rect x="4" y="3" width="1" height="1" fill="#8a8ab8"/><rect x="6" y="3" width="1" height="1" fill="#8a8ab8"/><rect x="1" y="4" width="1" height="1" fill="#8a8ab8"/><rect x="3" y="4" width="1" height="1" fill="#8a8ab8"/><rect x="5" y="4" width="1" height="1" fill="#8a8ab8"/><rect x="7" y="4" width="1" height="1" fill="#8a8ab8"/><rect x="0" y="5" width="1" height="1" fill="#8a8ab8"/><rect x="2" y="5" width="1" height="1" fill="#8a8ab8"/><rect x="4" y="5" width="1" height="1" fill="#8a8ab8"/><rect x="6" y="5" width="1" height="1" fill="#8a8ab8"/><rect x="1" y="6" width="1" height="1" fill="#8a8ab8"/><rect x="3" y="6" width="1" height="1" fill="#8a8ab8"/><rect x="5" y="6" width="1" height="1" fill="#8a8ab8"/><rect x="7" y="6" width="1" height="1" fill="#8a8ab8"/></svg><div class="lp">/recipes/84/healthy-recipes/</div><div class="c r1">1</div><div class="c r2">0</div><div class="c r3">0</div><div class="c r4">0</div><div class="c r5">0</div><div class="c nr">0</div><div class="kw">1</div><div class="tv">246,000</div></div>
<div class="row"><svg class="g" style="left:4px;top:11px" width="16" height="16" viewBox="0 0 48 48"><path fill="#EA4335" d="M24 9.5c3.54 0 6.71 1.22 9.21 3.6l6.85-6.85C35.9 2.38 30.47 0 24 0 14.62 0 6.51 5.38 2.56 13.22l7.98 6.19C12.43 13.72 17.74 9.5 24 9.5z"/><path fill="#4285F4" d="M46.98 24.55c0-1.57-.15-3.09-.38-4.55H24v9.02h12.94c-.58 2.96-2.26 5.480-4.780 7.180l7.730 6c4.510-4.180 7.090-10.360 7.090-17.650z"/><path fill="#FBBC05" d="M10.53 28.59c-.48-1.45-.76-2.99-.76-4.59s.27-3.14.76-4.59l-7.98-6.19C.92 16.46 0 20.12 0 24c0 3.88.92 7.54 2.56 10.78l7.97-6.19z"/><path fill="#34A853" d="M24 48c6.48 0 11.93-2.13 15.89-5.81l-7.73-6c-2.15 1.45-4.92 2.3-8.16 2.3-6.26 0-11.57-4.22-13.47-9.91l-7.98 6.19C6.51 42.62 14.62 48 24 48z"/></svg><svg class="fl" style="left:25px;top:14px" width="14" height="11" viewBox="0 0 14 11"><rect x="0" y="0" width="14" height="1" fill="#c4202b"/><rect x="0" y="1" width="14" height="1" fill="#fff"/><rect x="0" y="2" width="14" height="1" fill="#c4202b"/><rect x="0" y="3" width="14" height="1" fill="#fff"/><rect x="0" y="4" width="14" height="1" fill="#c4202b"/><rect x="0" y="5" width="14" height="1" fill="#fff"/><rect x="0" y="6" width="14" height="1" fill="#c4202b"/><rect x="0" y="7" width="14" height="1" fill="#fff"/><rect x="0" y="8" width="14" height="1" fill="#c4202b"/><rect x="0" y="9" width="14" height="1" fill="#fff"/><rect x="0" y="10" width="14" height="1" fill="#c4202b"/><rect x="0" y="0" width="8" height="7" fill="#2b2b7a"/><rect x="1" y="0" width="1" height="1" fill="#8a8ab8"/><rect x="3" y="0" width="1" height="1" fill="#8a8ab8"/><rect x="5" y="0" width="1" height="1" fill="#8a8ab8"/><rect x="7" y="0" width="1" height="1" fill="#8a8ab8"/><rect x="0" y="1" width="1" height="1" fill="#8a8ab8"/><rect x="2" y="1" width="1" height="1" fill="#8a8ab8"/><rect x="4" y="1" width="1" height="1" fill="#8a8ab8"/><rect x="6" y="1" width="1" height="1" fill="#8a8ab8"/><rect x="1" y="2" width="1" height="1" fill="#8a8ab8"/><rect x="3" y="2" width="1" height="1" fill="#8a8ab8"/><rect x="5" y="2" width="1" height="1" fill="#8a8ab8"/><rect x="7" y="2" width="1" height="1" fill="#8a8ab8"/><rect x="0" y="3" width="1" height="1" fill="#8a8ab8"/><rect x="2" y="3" width="1" height="1" fill="#8a8ab8"/><rect x="4" y="3" width="1" height="1" fill="#8a8ab8"/><rect x="6" y="3" width="1" height="1" fill="#8a8ab8"/><rect x="1" y="4" width="1" height="1" fill="#8a8ab8"/><rect x="3" y="4" width="1" height="1" fill="#8a8ab8"/><rect x="5" y="4" width="1" height="1" fill="#8a8ab8"/><rect x="7" y="4" width="1" height="1" fill="#8a8ab8"/><rect x="0" y="5" width="1" height="1" fill="#8a8ab8"/><rect x="2" y="5" width="1" height="1" fill="#8a8ab8"/><rect x="4" y="5" width="1" height="1" fill="#8a8ab8"/><rect x="6" y="5" width="1" height="1" fill="#8a8ab8"/><rect x="1" y="6" width="1" height="1" fill="#8a8ab8"/><rect x="3" y="6" width="1" height="1" fill="#8a8ab8"/><rect x="5" y="6" width="1" height="1" fill="#8a8ab8"/><rect x="7" y="6" width="1" height="1" fill="#8a8ab8"/></svg><div class="lp">/recipe/12682/apple-pie-by-grandma-ople/</div><div class="c r1">1</div><div class="c r2">0</div><div class="c r3">0</div><div class="c r4">0</div><div class="c r5">0</div><div class="c nr">0</div><div class="kw">1</div><div class="tv">14,800</div></div>
<div class="row odd"><svg class="g" style="left:4px;top:11px" width="16" height="16" viewBox="0 0 48 48"><path fill="#EA4335" d="M24 9.5c3.54 0 6.71 1.22 9.21 3.6l6.85-6.85C35.9 2.38 30.47 0 24 0 14.62 0 6.51 5.38 2.56 13.22l7.98 6.19C12.43 13.72 17.74 9.5 24 9.5z"/><path fill="#4285F4" d="M46.98 24.55c0-1.57-.15-3.09-.38-4.55H24v9.02h12.94c-.58 2.96-2.26 5.480-4.780 7.180l7.730 6c4.510-4.180 7.090-10.360 7.090-17.650z"/><path fill="#FBBC05" d="M10.53 28.59c-.48-1.45-.76-2.99-.76-4.59s.27-3.14.76-4.59l-7.98-6.19C.92 16.46 0 20.12 0 24c0 3.88.92 7.54 2.56 10.78l7.97-6.19z"/><path fill="#34A853" d="M24 48c6.48 0 11.93-2.13 15.89-5.81l-7.73-6c-2.15 1.45-4.92 2.3-8.16 2.3-6.26 0-11.57-4.22-13.47-9.91l-7.98 6.19C6.51 42.62 14.62 48 24 48z"/></svg><svg class="fl" style="left:25px;top:14px" width="14" height="11" viewBox="0 0 14 11"><rect x="0" y="0" width="14" height="1" fill="#c4202b"/><rect x="0" y="1" width="14" height="1" fill="#fff"/><rect x="0" y="2" width="14" height="1" fill="#c4202b"/><rect x="0" y="3" width="14" height="1" fill="#fff"/><rect x="0" y="4" width="14" height="1" fill="#c4202b"/><rect x="0" y="5" width="14" height="1" fill="#fff"/><rect x="0" y="6" width="14" height="1" fill="#c4202b"/><rect x="0" y="7" width="14" height="1" fill="#fff"/><rect x="0" y="8" width="14" height="1" fill="#c4202b"/><rect x="0" y="9" width="14" height="1" fill="#fff"/><rect x="0" y="10" width="14" height="1" fill="#c4202b"/><rect x="0" y="0" width="8" height="7" fill="#2b2b7a"/><rect x="1" y="0" width="1" height="1" fill="#8a8ab8"/><rect x="3" y="0" width="1" height="1" fill="#8a8ab8"/><rect x="5" y="0" width="1" height="1" fill="#8a8ab8"/><rect x="7" y="0" width="1" height="1" fill="#8a8ab8"/><rect x="0" y="1" width="1" height="1" fill="#8a8ab8"/><rect x="2" y="1" width="1" height="1" fill="#8a8ab8"/><rect x="4" y="1" width="1" height="1" fill="#8a8ab8"/><rect x="6" y="1" width="1" height="1" fill="#8a8ab8"/><rect x="1" y="2" width="1" height="1" fill="#8a8ab8"/><rect x="3" y="2" width="1" height="1" fill="#8a8ab8"/><rect x="5" y="2" width="1" height="1" fill="#8a8ab8"/><rect x="7" y="2" width="1" height="1" fill="#8a8ab8"/><rect x="0" y="3" width="1" height="1" fill="#8a8ab8"/><rect x="2" y="3" width="1" height="1" fill="#8a8ab8"/><rect x="4" y="3" width="1" height="1" fill="#8a8ab8"/><rect x="6" y="3" width="1" height="1" fill="#8a8ab8"/><rect x="1" y="4" width="1" height="1" fill="#8a8ab8"/><rect x="3" y="4" width="1" height="1" fill="#8a8ab8"/><rect x="5" y="4" width="1" height="1" fill="#8a8ab8"/><rect x="7" y="4" width="1" height="1" fill="#8a8ab8"/><rect x="0" y="5" width="1" height="1" fill="#8a8ab8"/><rect x="2" y="5" width="1" height="1" fill="#8a8ab8"/><rect x="4" y="5" width="1" height="1" fill="#8a8ab8"/><rect x="6" y="5" width="1" height="1" fill="#8a8ab8"/><rect x="1" y="6" width="1" height="1" fill="#8a8ab8"/><rect x="3" y="6" width="1" height="1" fill="#8a8ab8"/><rect x="5" y="6" width="1" height="1" fill="#8a8ab8"/><rect x="7" y="6" width="1" height="1" fill="#8a8ab8"/></svg><div class="lp">/recipes/193/holidays-and-events/new-year/</div><div class="c r1">0</div><div class="c r2">1</div><div class="c r3">0</div><div class="c r4">0</div><div class="c r5">0</div><div class="c nr">0</div><div class="kw">1</div><div class="tv">880</div></div>
<div class="row"><svg class="g" style="left:4px;top:11px" width="16" height="16" viewBox="0 0 48 48"><path fill="#EA4335" d="M24 9.5c3.54 0 6.71 1.22 9.21 3.6l6.85-6.85C35.9 2.38 30.47 0 24 0 14.62 0 6.51 5.38 2.56 13.22l7.98 6.19C12.43 13.72 17.74 9.5 24 9.5z"/><path fill="#4285F4" d="M46.98 24.55c0-1.57-.15-3.09-.38-4.55H24v9.02h12.94c-.58 2.96-2.26 5.480-4.780 7.180l7.730 6c4.510-4.180 7.090-10.360 7.090-17.650z"/><path fill="#FBBC05" d="M10.53 28.59c-.48-1.45-.76-2.99-.76-4.59s.27-3.14.76-4.59l-7.98-6.19C.92 16.46 0 20.12 0 24c0 3.88.92 7.54 2.56 10.78l7.97-6.19z"/><path fill="#34A853" d="M24 48c6.48 0 11.93-2.13 15.89-5.81l-7.73-6c-2.15 1.45-4.92 2.3-8.16 2.3-6.26 0-11.57-4.22-13.47-9.91l-7.98 6.19C6.51 42.62 14.62 48 24 48z"/></svg><svg class="fl" style="left:25px;top:14px" width="14" height="11" viewBox="0 0 14 11"><rect x="0" y="0" width="14" height="1" fill="#c4202b"/><rect x="0" y="1" width="14" height="1" fill="#fff"/><rect x="0" y="2" width="14" height="1" fill="#c4202b"/><rect x="0" y="3" width="14" height="1" fill="#fff"/><rect x="0" y="4" width="14" height="1" fill="#c4202b"/><rect x="0" y="5" width="14" height="1" fill="#fff"/><rect x="0" y="6" width="14" height="1" fill="#c4202b"/><rect x="0" y="7" width="14" height="1" fill="#fff"/><rect x="0" y="8" width="14" height="1" fill="#c4202b"/><rect x="0" y="9" width="14" height="1" fill="#fff"/><rect x="0" y="10" width="14" height="1" fill="#c4202b"/><rect x="0" y="0" width="8" height="7" fill="#2b2b7a"/><rect x="1" y="0" width="1" height="1" fill="#8a8ab8"/><rect x="3" y="0" width="1" height="1" fill="#8a8ab8"/><rect x="5" y="0" width="1" height="1" fill="#8a8ab8"/><rect x="7" y="0" width="1" height="1" fill="#8a8ab8"/><rect x="0" y="1" width="1" height="1" fill="#8a8ab8"/><rect x="2" y="1" width="1" height="1" fill="#8a8ab8"/><rect x="4" y="1" width="1" height="1" fill="#8a8ab8"/><rect x="6" y="1" width="1" height="1" fill="#8a8ab8"/><rect x="1" y="2" width="1" height="1" fill="#8a8ab8"/><rect x="3" y="2" width="1" height="1" fill="#8a8ab8"/><rect x="5" y="2" width="1" height="1" fill="#8a8ab8"/><rect x="7" y="2" width="1" height="1" fill="#8a8ab8"/><rect x="0" y="3" width="1" height="1" fill="#8a8ab8"/><rect x="2" y="3" width="1" height="1" fill="#8a8ab8"/><rect x="4" y="3" width="1" height="1" fill="#8a8ab8"/><rect x="6" y="3" width="1" height="1" fill="#8a8ab8"/><rect x="1" y="4" width="1" height="1" fill="#8a8ab8"/><rect x="3" y="4" width="1" height="1" fill="#8a8ab8"/><rect x="5" y="4" width="1" height="1" fill="#8a8ab8"/><rect x="7" y="4" width="1" height="1" fill="#8a8ab8"/><rect x="0" y="5" width="1" height="1" fill="#8a8ab8"/><rect x="2" y="5" width="1" height="1" fill="#8a8ab8"/><rect x="4" y="5" width="1" height="1" fill="#8a8ab8"/><rect x="6" y="5" width="1" height="1" fill="#8a8ab8"/><rect x="1" y="6" width="1" height="1" fill="#8a8ab8"/><rect x="3" y="6" width="1" height="1" fill="#8a8ab8"/><rect x="5" y="6" width="1" height="1" fill="#8a8ab8"/><rect x="7" y="6" width="1" height="1" fill="#8a8ab8"/></svg><div class="lp">/recipes/201/meat-and-poultry/chicken/</div><div class="c r1">1</div><div class="c r2">0</div><div class="c r3">0</div><div class="c r4">0</div><div class="c r5">0</div><div class="c nr">0</div><div class="kw">1</div><div class="tv">673,000</div></div>
<div class="row odd"><svg class="g" style="left:4px;top:11px" width="16" height="16" viewBox="0 0 48 48"><path fill="#EA4335" d="M24 9.5c3.54 0 6.71 1.22 9.21 3.6l6.85-6.85C35.9 2.38 30.47 0 24 0 14.62 0 6.51 5.38 2.56 13.22l7.98 6.19C12.43 13.72 17.74 9.5 24 9.5z"/><path fill="#4285F4" d="M46.98 24.55c0-1.57-.15-3.09-.38-4.55H24v9.02h12.94c-.58 2.96-2.26 5.480-4.780 7.180l7.730 6c4.510-4.180 7.090-10.360 7.090-17.650z"/><path fill="#FBBC05" d="M10.53 28.59c-.48-1.45-.76-2.99-.76-4.59s.27-3.14.76-4.59l-7.98-6.19C.92 16.46 0 20.12 0 24c0 3.88.92 7.54 2.56 10.78l7.97-6.19z"/><path fill="#34A853" d="M24 48c6.48 0 11.93-2.13 15.89-5.81l-7.73-6c-2.15 1.45-4.92 2.3-8.16 2.3-6.26 0-11.57-4.22-13.47-9.91l-7.98 6.19C6.51 42.62 14.62 48 24 48z"/></svg><svg class="fl" style="left:25px;top:14px" width="14" height="11" viewBox="0 0 14 11"><rect x="0" y="0" width="14" height="1" fill="#c4202b"/><rect x="0" y="1" width="14" height="1" fill="#fff"/><rect x="0" y="2" width="14" height="1" fill="#c4202b"/><rect x="0" y="3" width="14" height="1" fill="#fff"/><rect x="0" y="4" width="14" height="1" fill="#c4202b"/><rect x="0" y="5" width="14" height="1" fill="#fff"/><rect x="0" y="6" width="14" height="1" fill="#c4202b"/><rect x="0" y="7" width="14" height="1" fill="#fff"/><rect x="0" y="8" width="14" height="1" fill="#c4202b"/><rect x="0" y="9" width="14" height="1" fill="#fff"/><rect x="0" y="10" width="14" height="1" fill="#c4202b"/><rect x="0" y="0" width="8" height="7" fill="#2b2b7a"/><rect x="1" y="0" width="1" height="1" fill="#8a8ab8"/><rect x="3" y="0" width="1" height="1" fill="#8a8ab8"/><rect x="5" y="0" width="1" height="1" fill="#8a8ab8"/><rect x="7" y="0" width="1" height="1" fill="#8a8ab8"/><rect x="0" y="1" width="1" height="1" fill="#8a8ab8"/><rect x="2" y="1" width="1" height="1" fill="#8a8ab8"/><rect x="4" y="1" width="1" height="1" fill="#8a8ab8"/><rect x="6" y="1" width="1" height="1" fill="#8a8ab8"/><rect x="1" y="2" width="1" height="1" fill="#8a8ab8"/><rect x="3" y="2" width="1" height="1" fill="#8a8ab8"/><rect x="5" y="2" width="1" height="1" fill="#8a8ab8"/><rect x="7" y="2" width="1" height="1" fill="#8a8ab8"/><rect x="0" y="3" width="1" height="1" fill="#8a8ab8"/><rect x="2" y="3" width="1" height="1" fill="#8a8ab8"/><rect x="4" y="3" width="1" height="1" fill="#8a8ab8"/><rect x="6" y="3" width="1" height="1" fill="#8a8ab8"/><rect x="1" y="4" width="1" height="1" fill="#8a8ab8"/><rect x="3" y="4" width="1" height="1" fill="#8a8ab8"/><rect x="5" y="4" width="1" height="1" fill="#8a8ab8"/><rect x="7" y="4" width="1" height="1" fill="#8a8ab8"/><rect x="0" y="5" width="1" height="1" fill="#8a8ab8"/><rect x="2" y="5" width="1" height="1" fill="#8a8ab8"/><rect x="4" y="5" width="1" height="1" fill="#8a8ab8"/><rect x="6" y="5" width="1" height="1" fill="#8a8ab8"/><rect x="1" y="6" width="1" height="1" fill="#8a8ab8"/><rect x="3" y="6" width="1" height="1" fill="#8a8ab8"/><rect x="5" y="6" width="1" height="1" fill="#8a8ab8"/><rect x="7" y="6" width="1" height="1" fill="#8a8ab8"/></svg><div class="lp">/recipe/219165/chef-johns-easy-apple-pie/</div><div class="c r1">1</div><div class="c r2">0</div><div class="c r3">0</div><div class="c r4">0</div><div class="c r5">0</div><div class="c nr">0</div><div class="kw">1</div><div class="tv">22,200</div></div>
<div class="row"><svg class="g" style="left:4px;top:11px" width="16" height="16" viewBox="0 0 48 48"><path fill="#EA4335" d="M24 9.5c3.54 0 6.71 1.22 9.21 3.6l6.85-6.85C35.9 2.38 30.47 0 24 0 14.62 0 6.51 5.38 2.56 13.22l7.98 6.19C12.43 13.72 17.74 9.5 24 9.5z"/><path fill="#4285F4" d="M46.98 24.55c0-1.57-.15-3.09-.38-4.55H24v9.02h12.94c-.58 2.96-2.26 5.480-4.780 7.180l7.730 6c4.510-4.180 7.090-10.360 7.090-17.650z"/><path fill="#FBBC05" d="M10.53 28.59c-.48-1.45-.76-2.99-.76-4.59s.27-3.14.76-4.59l-7.98-6.19C.92 16.46 0 20.12 0 24c0 3.88.92 7.54 2.56 10.78l7.97-6.19z"/><path fill="#34A853" d="M24 48c6.48 0 11.93-2.13 15.89-5.81l-7.73-6c-2.15 1.45-4.92 2.3-8.16 2.3-6.26 0-11.57-4.22-13.47-9.91l-7.98 6.19C6.51 42.62 14.62 48 24 48z"/></svg><svg class="fl" style="left:25px;top:14px" width="14" height="11" viewBox="0 0 14 11"><rect x="0" y="0" width="14" height="1" fill="#c4202b"/><rect x="0" y="1" width="14" height="1" fill="#fff"/><rect x="0" y="2" width="14" height="1" fill="#c4202b"/><rect x="0" y="3" width="14" height="1" fill="#fff"/><rect x="0" y="4" width="14" height="1" fill="#c4202b"/><rect x="0" y="5" width="14" height="1" fill="#fff"/><rect x="0" y="6" width="14" height="1" fill="#c4202b"/><rect x="0" y="7" width="14" height="1" fill="#fff"/><rect x="0" y="8" width="14" height="1" fill="#c4202b"/><rect x="0" y="9" width="14" height="1" fill="#fff"/><rect x="0" y="10" width="14" height="1" fill="#c4202b"/><rect x="0" y="0" width="8" height="7" fill="#2b2b7a"/><rect x="1" y="0" width="1" height="1" fill="#8a8ab8"/><rect x="3" y="0" width="1" height="1" fill="#8a8ab8"/><rect x="5" y="0" width="1" height="1" fill="#8a8ab8"/><rect x="7" y="0" width="1" height="1" fill="#8a8ab8"/><rect x="0" y="1" width="1" height="1" fill="#8a8ab8"/><rect x="2" y="1" width="1" height="1" fill="#8a8ab8"/><rect x="4" y="1" width="1" height="1" fill="#8a8ab8"/><rect x="6" y="1" width="1" height="1" fill="#8a8ab8"/><rect x="1" y="2" width="1" height="1" fill="#8a8ab8"/><rect x="3" y="2" width="1" height="1" fill="#8a8ab8"/><rect x="5" y="2" width="1" height="1" fill="#8a8ab8"/><rect x="7" y="2" width="1" height="1" fill="#8a8ab8"/><rect x="0" y="3" width="1" height="1" fill="#8a8ab8"/><rect x="2" y="3" width="1" height="1" fill="#8a8ab8"/><rect x="4" y="3" width="1" height="1" fill="#8a8ab8"/><rect x="6" y="3" width="1" height="1" fill="#8a8ab8"/><rect x="1" y="4" width="1" height="1" fill="#8a8ab8"/><rect x="3" y="4" width="1" height="1" fill="#8a8ab8"/><rect x="5" y="4" width="1" height="1" fill="#8a8ab8"/><rect x="7" y="4" width="1" height="1" fill="#8a8ab8"/><rect x="0" y="5" width="1" height="1" fill="#8a8ab8"/><rect x="2" y="5" width="1" height="1" fill="#8a8ab8"/><rect x="4" y="5" width="1" height="1" fill="#8a8ab8"/><rect x="6" y="5" width="1" height="1" fill="#8a8ab8"/><rect x="1" y="6" width="1" height="1" fill="#8a8ab8"/><rect x="3" y="6" width="1" height="1" fill="#8a8ab8"/><rect x="5" y="6" width="1" height="1" fill="#8a8ab8"/><rect x="7" y="6" width="1" height="1" fill="#8a8ab8"/></svg><div class="lp">/recipe/21234/holiday-punch-i/</div><div class="c r1">0</div><div class="c r2">1</div><div class="c r3">0</div><div class="c r4">0</div><div class="c r5">0</div><div class="c nr">0</div><div class="kw">1</div><div class="tv">1,300</div></div>
<div class="row odd"><svg class="g" style="left:4px;top:11px" width="16" height="16" viewBox="0 0 48 48"><path fill="#EA4335" d="M24 9.5c3.54 0 6.71 1.22 9.21 3.6l6.85-6.85C35.9 2.38 30.47 0 24 0 14.62 0 6.51 5.38 2.56 13.22l7.98 6.19C12.43 13.72 17.74 9.5 24 9.5z"/><path fill="#4285F4" d="M46.98 24.55c0-1.57-.15-3.09-.38-4.55H24v9.02h12.94c-.58 2.96-2.26 5.480-4.780 7.180l7.730 6c4.510-4.180 7.090-10.360 7.090-17.650z"/><path fill="#FBBC05" d="M10.53 28.59c-.48-1.45-.76-2.99-.76-4.59s.27-3.14.76-4.59l-7.98-6.19C.92 16.46 0 20.12 0 24c0 3.88.92 7.54 2.56 10.78l7.97-6.19z"/><path fill="#34A853" d="M24 48c6.48 0 11.93-2.13 15.89-5.81l-7.73-6c-2.15 1.45-4.92 2.3-8.16 2.3-6.26 0-11.57-4.22-13.47-9.91l-7.98 6.19C6.51 42.62 14.62 48 24 48z"/></svg><svg class="fl" style="left:25px;top:14px" width="14" height="11" viewBox="0 0 14 11"><rect x="0" y="0" width="14" height="1" fill="#c4202b"/><rect x="0" y="1" width="14" height="1" fill="#fff"/><rect x="0" y="2" width="14" height="1" fill="#c4202b"/><rect x="0" y="3" width="14" height="1" fill="#fff"/><rect x="0" y="4" width="14" height="1" fill="#c4202b"/><rect x="0" y="5" width="14" height="1" fill="#fff"/><rect x="0" y="6" width="14" height="1" fill="#c4202b"/><rect x="0" y="7" width="14" height="1" fill="#fff"/><rect x="0" y="8" width="14" height="1" fill="#c4202b"/><rect x="0" y="9" width="14" height="1" fill="#fff"/><rect x="0" y="10" width="14" height="1" fill="#c4202b"/><rect x="0" y="0" width="8" height="7" fill="#2b2b7a"/><rect x="1" y="0" width="1" height="1" fill="#8a8ab8"/><rect x="3" y="0" width="1" height="1" fill="#8a8ab8"/><rect x="5" y="0" width="1" height="1" fill="#8a8ab8"/><rect x="7" y="0" width="1" height="1" fill="#8a8ab8"/><rect x="0" y="1" width="1" height="1" fill="#8a8ab8"/><rect x="2" y="1" width="1" height="1" fill="#8a8ab8"/><rect x="4" y="1" width="1" height="1" fill="#8a8ab8"/><rect x="6" y="1" width="1" height="1" fill="#8a8ab8"/><rect x="1" y="2" width="1" height="1" fill="#8a8ab8"/><rect x="3" y="2" width="1" height="1" fill="#8a8ab8"/><rect x="5" y="2" width="1" height="1" fill="#8a8ab8"/><rect x="7" y="2" width="1" height="1" fill="#8a8ab8"/><rect x="0" y="3" width="1" height="1" fill="#8a8ab8"/><rect x="2" y="3" width="1" height="1" fill="#8a8ab8"/><rect x="4" y="3" width="1" height="1" fill="#8a8ab8"/><rect x="6" y="3" width="1" height="1" fill="#8a8ab8"/><rect x="1" y="4" width="1" height="1" fill="#8a8ab8"/><rect x="3" y="4" width="1" height="1" fill="#8a8ab8"/><rect x="5" y="4" width="1" height="1" fill="#8a8ab8"/><rect x="7" y="4" width="1" height="1" fill="#8a8ab8"/><rect x="0" y="5" width="1" height="1" fill="#8a8ab8"/><rect x="2" y="5" width="1" height="1" fill="#8a8ab8"/><rect x="4" y="5" width="1" height="1" fill="#8a8ab8"/><rect x="6" y="5" width="1" height="1" fill="#8a8ab8"/><rect x="1" y="6" width="1" height="1" fill="#8a8ab8"/><rect x="3" y="6" width="1" height="1" fill="#8a8ab8"/><rect x="5" y="6" width="1" height="1" fill="#8a8ab8"/><rect x="7" y="6" width="1" height="1" fill="#8a8ab8"/></svg><div class="lp">/recipes/699/world-cuisine/asian/japanese/</div><div class="c r1">1</div><div class="c r2">0</div><div class="c r3">0</div><div class="c r4">0</div><div class="c r5">0</div><div class="c nr">0</div><div class="kw">1</div><div class="tv">6,600</div></div>
<div class="row"><svg class="g" style="left:4px;top:11px" width="16" height="16" viewBox="0 0 48 48"><path fill="#EA4335" d="M24 9.5c3.54 0 6.71 1.22 9.21 3.6l6.85-6.85C35.9 2.38 30.47 0 24 0 14.62 0 6.51 5.38 2.56 13.22l7.98 6.19C12.43 13.72 17.74 9.5 24 9.5z"/><path fill="#4285F4" d="M46.98 24.55c0-1.57-.15-3.09-.38-4.55H24v9.02h12.94c-.58 2.96-2.26 5.480-4.780 7.180l7.730 6c4.510-4.180 7.090-10.360 7.090-17.650z"/><path fill="#FBBC05" d="M10.53 28.59c-.48-1.45-.76-2.99-.76-4.59s.27-3.14.76-4.59l-7.98-6.19C.92 16.46 0 20.12 0 24c0 3.88.92 7.54 2.56 10.78l7.97-6.19z"/><path fill="#34A853" d="M24 48c6.48 0 11.93-2.13 15.89-5.81l-7.73-6c-2.15 1.45-4.92 2.3-8.16 2.3-6.26 0-11.57-4.22-13.47-9.91l-7.98 6.19C6.51 42.62 14.62 48 24 48z"/></svg><svg class="fl" style="left:25px;top:14px" width="14" height="11" viewBox="0 0 14 11"><rect x="0" y="0" width="14" height="1" fill="#c4202b"/><rect x="0" y="1" width="14" height="1" fill="#fff"/><rect x="0" y="2" width="14" height="1" fill="#c4202b"/><rect x="0" y="3" width="14" height="1" fill="#fff"/><rect x="0" y="4" width="14" height="1" fill="#c4202b"/><rect x="0" y="5" width="14" height="1" fill="#fff"/><rect x="0" y="6" width="14" height="1" fill="#c4202b"/><rect x="0" y="7" width="14" height="1" fill="#fff"/><rect x="0" y="8" width="14" height="1" fill="#c4202b"/><rect x="0" y="9" width="14" height="1" fill="#fff"/><rect x="0" y="10" width="14" height="1" fill="#c4202b"/><rect x="0" y="0" width="8" height="7" fill="#2b2b7a"/><rect x="1" y="0" width="1" height="1" fill="#8a8ab8"/><rect x="3" y="0" width="1" height="1" fill="#8a8ab8"/><rect x="5" y="0" width="1" height="1" fill="#8a8ab8"/><rect x="7" y="0" width="1" height="1" fill="#8a8ab8"/><rect x="0" y="1" width="1" height="1" fill="#8a8ab8"/><rect x="2" y="1" width="1" height="1" fill="#8a8ab8"/><rect x="4" y="1" width="1" height="1" fill="#8a8ab8"/><rect x="6" y="1" width="1" height="1" fill="#8a8ab8"/><rect x="1" y="2" width="1" height="1" fill="#8a8ab8"/><rect x="3" y="2" width="1" height="1" fill="#8a8ab8"/><rect x="5" y="2" width="1" height="1" fill="#8a8ab8"/><rect x="7" y="2" width="1" height="1" fill="#8a8ab8"/><rect x="0" y="3" width="1" height="1" fill="#8a8ab8"/><rect x="2" y="3" width="1" height="1" fill="#8a8ab8"/><rect x="4" y="3" width="1" height="1" fill="#8a8ab8"/><rect x="6" y="3" width="1" height="1" fill="#8a8ab8"/><rect x="1" y="4" width="1" height="1" fill="#8a8ab8"/><rect x="3" y="4" width="1" height="1" fill="#8a8ab8"/><rect x="5" y="4" width="1" height="1" fill="#8a8ab8"/><rect x="7" y="4" width="1" height="1" fill="#8a8ab8"/><rect x="0" y="5" width="1" height="1" fill="#8a8ab8"/><rect x="2" y="5" width="1" height="1" fill="#8a8ab8"/><rect x="4" y="5" width="1" height="1" fill="#8a8ab8"/><rect x="6" y="5" width="1" height="1" fill="#8a8ab8"/><rect x="1" y="6" width="1" height="1" fill="#8a8ab8"/><rect x="3" y="6" width="1" height="1" fill="#8a8ab8"/><rect x="5" y="6" width="1" height="1" fill="#8a8ab8"/><rect x="7" y="6" width="1" height="1" fill="#8a8ab8"/></svg><div class="lp">/recipes/17245/main-dish/pasta/</div><div class="c r1">1</div><div class="c r2">0</div><div class="c r3">0</div><div class="c r4">0</div><div class="c r5">0</div><div class="c nr">0</div><div class="kw">1</div><div class="tv">201,000</div></div>
<div class="row odd"><svg class="g" style="left:4px;top:11px" width="16" height="16" viewBox="0 0 48 48"><path fill="#EA4335" d="M24 9.5c3.54 0 6.71 1.22 9.21 3.6l6.85-6.85C35.9 2.38 30.47 0 24 0 14.62 0 6.51 5.38 2.56 13.22l7.98 6.19C12.43 13.72 17.74 9.5 24 9.5z"/><path fill="#4285F4" d="M46.98 24.55c0-1.57-.15-3.09-.38-4.55H24v9.02h12.94c-.58 2.96-2.26 5.480-4.780 7.180l7.730 6c4.510-4.180 7.090-10.360 7.090-17.650z"/><path fill="#FBBC05" d="M10.53 28.59c-.48-1.45-.76-2.99-.76-4.59s.27-3.14.76-4.59l-7.98-6.19C.92 16.46 0 20.12 0 24c0 3.88.92 7.54 2.56 10.78l7.97-6.19z"/><path fill="#34A853" d="M24 48c6.48 0 11.93-2.13 15.89-5.81l-7.73-6c-2.15 1.45-4.92 2.3-8.16 2.3-6.26 0-11.57-4.22-13.47-9.91l-7.98 6.19C6.51 42.62 14.62 48 24 48z"/></svg><svg class="fl" style="left:25px;top:14px" width="14" height="11" viewBox="0 0 14 11"><rect x="0" y="0" width="14" height="1" fill="#c4202b"/><rect x="0" y="1" width="14" height="1" fill="#fff"/><rect x="0" y="2" width="14" height="1" fill="#c4202b"/><rect x="0" y="3" width="14" height="1" fill="#fff"/><rect x="0" y="4" width="14" height="1" fill="#c4202b"/><rect x="0" y="5" width="14" height="1" fill="#fff"/><rect x="0" y="6" width="14" height="1" fill="#c4202b"/><rect x="0" y="7" width="14" height="1" fill="#fff"/><rect x="0" y="8" width="14" height="1" fill="#c4202b"/><rect x="0" y="9" width="14" height="1" fill="#fff"/><rect x="0" y="10" width="14" height="1" fill="#c4202b"/><rect x="0" y="0" width="8" height="7" fill="#2b2b7a"/><rect x="1" y="0" width="1" height="1" fill="#8a8ab8"/><rect x="3" y="0" width="1" height="1" fill="#8a8ab8"/><rect x="5" y="0" width="1" height="1" fill="#8a8ab8"/><rect x="7" y="0" width="1" height="1" fill="#8a8ab8"/><rect x="0" y="1" width="1" height="1" fill="#8a8ab8"/><rect x="2" y="1" width="1" height="1" fill="#8a8ab8"/><rect x="4" y="1" width="1" height="1" fill="#8a8ab8"/><rect x="6" y="1" width="1" height="1" fill="#8a8ab8"/><rect x="1" y="2" width="1" height="1" fill="#8a8ab8"/><rect x="3" y="2" width="1" height="1" fill="#8a8ab8"/><rect x="5" y="2" width="1" height="1" fill="#8a8ab8"/><rect x="7" y="2" width="1" height="1" fill="#8a8ab8"/><rect x="0" y="3" width="1" height="1" fill="#8a8ab8"/><rect x="2" y="3" width="1" height="1" fill="#8a8ab8"/><rect x="4" y="3" width="1" height="1" fill="#8a8ab8"/><rect x="6" y="3" width="1" height="1" fill="#8a8ab8"/><rect x="1" y="4" width="1" height="1" fill="#8a8ab8"/><rect x="3" y="4" width="1" height="1" fill="#8a8ab8"/><rect x="5" y="4" width="1" height="1" fill="#8a8ab8"/><rect x="7" y="4" width="1" height="1" fill="#8a8ab8"/><rect x="0" y="5" width="1" height="1" fill="#8a8ab8"/><rect x="2" y="5" width="1" height="1" fill="#8a8ab8"/><rect x="4" y="5" width="1" height="1" fill="#8a8ab8"/><rect x="6" y="5" width="1" height="1" fill="#8a8ab8"/><rect x="1" y="6" width="1" height="1" fill="#8a8ab8"/><rect x="3" y="6" width="1" height="1" fill="#8a8ab8"/><rect x="5" y="6" width="1" height="1" fill="#8a8ab8"/><rect x="7" y="6" width="1" height="1" fill="#8a8ab8"/></svg><div class="lp">/recipes/841/holidays-and-events/christmas/desserts/ch...</div><div class="c r1">0</div><div class="c r2">1</div><div class="c r3">0</div><div class="c r4">0</div><div class="c r5">0</div><div class="c nr">0</div><div class="kw">1</div><div class="tv">4,400</div></div>
<div class="row"><svg class="g" style="left:4px;top:11px" width="16" height="16" viewBox="0 0 48 48"><path fill="#EA4335" d="M24 9.5c3.54 0 6.71 1.22 9.21 3.6l6.85-6.85C35.9 2.38 30.47 0 24 0 14.62 0 6.51 5.38 2.56 13.22l7.98 6.19C12.43 13.72 17.74 9.5 24 9.5z"/><path fill="#4285F4" d="M46.98 24.55c0-1.57-.15-3.09-.38-4.55H24v9.02h12.94c-.58 2.96-2.26 5.480-4.780 7.180l7.730 6c4.510-4.180 7.090-10.360 7.090-17.650z"/><path fill="#FBBC05" d="M10.53 28.59c-.48-1.45-.76-2.99-.76-4.59s.27-3.14.76-4.59l-7.98-6.19C.92 16.46 0 20.12 0 24c0 3.88.92 7.54 2.56 10.78l7.97-6.19z"/><path fill="#34A853" d="M24 48c6.48 0 11.93-2.13 15.89-5.81l-7.73-6c-2.15 1.45-4.92 2.3-8.16 2.3-6.26 0-11.57-4.22-13.47-9.91l-7.98 6.19C6.51 42.62 14.62 48 24 48z"/></svg><svg class="fl" style="left:25px;top:14px" width="14" height="11" viewBox="0 0 14 11"><rect x="0" y="0" width="14" height="1" fill="#c4202b"/><rect x="0" y="1" width="14" height="1" fill="#fff"/><rect x="0" y="2" width="14" height="1" fill="#c4202b"/><rect x="0" y="3" width="14" height="1" fill="#fff"/><rect x="0" y="4" width="14" height="1" fill="#c4202b"/><rect x="0" y="5" width="14" height="1" fill="#fff"/><rect x="0" y="6" width="14" height="1" fill="#c4202b"/><rect x="0" y="7" width="14" height="1" fill="#fff"/><rect x="0" y="8" width="14" height="1" fill="#c4202b"/><rect x="0" y="9" width="14" height="1" fill="#fff"/><rect x="0" y="10" width="14" height="1" fill="#c4202b"/><rect x="0" y="0" width="8" height="7" fill="#2b2b7a"/><rect x="1" y="0" width="1" height="1" fill="#8a8ab8"/><rect x="3" y="0" width="1" height="1" fill="#8a8ab8"/><rect x="5" y="0" width="1" height="1" fill="#8a8ab8"/><rect x="7" y="0" width="1" height="1" fill="#8a8ab8"/><rect x="0" y="1" width="1" height="1" fill="#8a8ab8"/><rect x="2" y="1" width="1" height="1" fill="#8a8ab8"/><rect x="4" y="1" width="1" height="1" fill="#8a8ab8"/><rect x="6" y="1" width="1" height="1" fill="#8a8ab8"/><rect x="1" y="2" width="1" height="1" fill="#8a8ab8"/><rect x="3" y="2" width="1" height="1" fill="#8a8ab8"/><rect x="5" y="2" width="1" height="1" fill="#8a8ab8"/><rect x="7" y="2" width="1" height="1" fill="#8a8ab8"/><rect x="0" y="3" width="1" height="1" fill="#8a8ab8"/><rect x="2" y="3" width="1" height="1" fill="#8a8ab8"/><rect x="4" y="3" width="1" height="1" fill="#8a8ab8"/><rect x="6" y="3" width="1" height="1" fill="#8a8ab8"/><rect x="1" y="4" width="1" height="1" fill="#8a8ab8"/><rect x="3" y="4" width="1" height="1" fill="#8a8ab8"/><rect x="5" y="4" width="1" height="1" fill="#8a8ab8"/><rect x="7" y="4" width="1" height="1" fill="#8a8ab8"/><rect x="0" y="5" width="1" height="1" fill="#8a8ab8"/><rect x="2" y="5" width="1" height="1" fill="#8a8ab8"/><rect x="4" y="5" width="1" height="1" fill="#8a8ab8"/><rect x="6" y="5" width="1" height="1" fill="#8a8ab8"/><rect x="1" y="6" width="1" height="1" fill="#8a8ab8"/><rect x="3" y="6" width="1" height="1" fill="#8a8ab8"/><rect x="5" y="6" width="1" height="1" fill="#8a8ab8"/><rect x="7" y="6" width="1" height="1" fill="#8a8ab8"/></svg><div class="lp">/recipe/10813/best-chocolate-chip-cookies/</div><div class="c r1">1</div><div class="c r2">0</div><div class="c r3">0</div><div class="c r4">0</div><div class="c r5">0</div><div class="c nr">0</div><div class="kw">1</div><div class="tv">1,300</div></div>
</div>
</div>
</body></html>
